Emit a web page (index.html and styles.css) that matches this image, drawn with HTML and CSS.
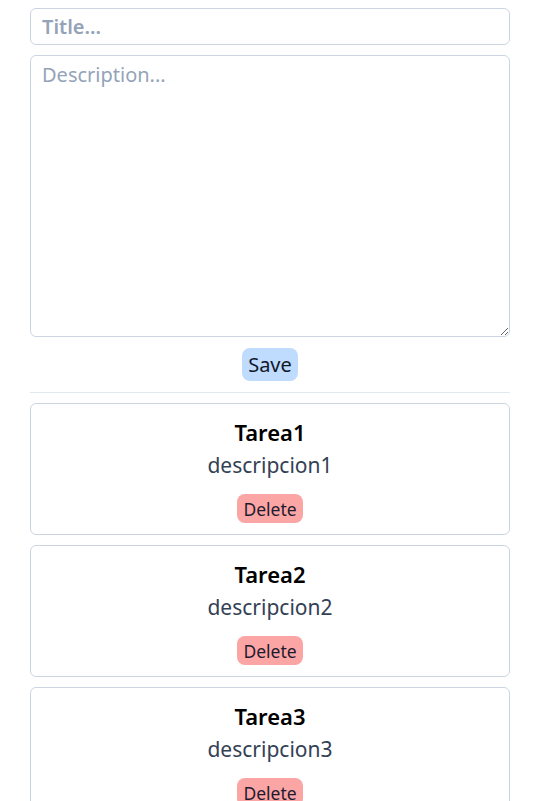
FILE: index.html
```html
<!DOCTYPE html>
<html lang="es">
<head>
<meta charset="utf-8">
<link rel="stylesheet" href="styles.css">
</head>
<body>
<div class="app">
  <form class="form">
    <input class="title-input" type="text" placeholder="Title...">
    <textarea class="desc-input" placeholder="Description..."></textarea>
    <button type="button" class="save">Save</button>
  </form>
  <hr class="sep">
  <div class="list">
    <div class="card">
      <h3 class="card-title">Tarea1</h3>
      <p class="card-desc">descripcion1</p>
      <button type="button" class="delete">Delete</button>
    </div>
    <div class="card">
      <h3 class="card-title">Tarea2</h3>
      <p class="card-desc">descripcion2</p>
      <button type="button" class="delete">Delete</button>
    </div>
    <div class="card">
      <h3 class="card-title">Tarea3</h3>
      <p class="card-desc">descripcion3</p>
      <button type="button" class="delete">Delete</button>
    </div>
  </div>
</div>
</body>
</html>
```

FILE: styles.css
```css
* { box-sizing: border-box; }
html, body { margin: 0; padding: 0; background: #fff; }
body {
  padding: 8px 0 0 30px;
  font-family: "Noto Sans", "Open Sans", sans-serif;
  color: #000;
}
.app { width: 480px; }
.form { display: flex; flex-direction: column; align-items: center; gap: 10px; margin: 0; }
.title-input, .desc-input {
  width: 100%;
  border: 1px solid #cbd5e1;
  border-radius: 6px;
  font-family: inherit;
  font-size: 20px;
  padding: 0 11px;
  outline: none;
  color: #000;
}
.title-input { height: 37px; font-weight: 600; }
.title-input::placeholder { color: #94a3b8; font-weight: 600; }
.desc-input { height: 282px; resize: vertical; padding-top: 5px; display: block; }
.desc-input::placeholder { color: #94a3b8; }
.save {
  margin-top: 1px;
  background: #bfdbfe;
  border: none;
  border-radius: 8px;
  font-family: inherit;
  font-size: 20px;
  height: 33px;
  padding: 0 6px;
  color: #0f172a;
}
.sep { border: none; border-top: 1px solid #e2e8f0; margin: 11px 0 10px; height: 0; }
.list { display: flex; flex-direction: column; gap: 10px; }
.card {
  border: 1px solid #cbd5e1;
  border-radius: 6px;
  height: 132px;
  display: flex;
  flex-direction: column;
  align-items: center;
  padding-top: 12px;
}
.card-title { margin: 0; font-size: 22px; font-weight: 600; line-height: 32px; }
.card-desc { margin: 0; font-size: 21px; color: #334155; line-height: 34px; }
.delete {
  margin-top: 12px;
  background: #fca5a5;
  border: none;
  border-radius: 8px;
  font-family: inherit;
  font-size: 17.5px;
  height: 29px;
  padding: 0 6px;
  color: #1e1b2e;
}
```
